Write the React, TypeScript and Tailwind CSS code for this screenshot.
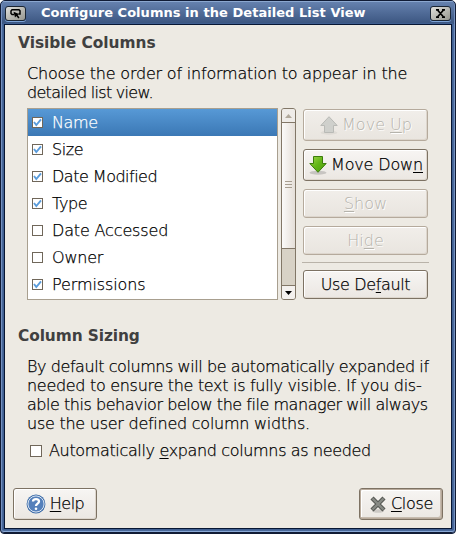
import React from "react";

const body = "font-['DejaVu_Sans',sans-serif] font-extralight text-black";
const stroke = "[-webkit-text-stroke:0.25px_currentColor]";

type ButtonProps = { className?: string; disabled?: boolean; focused?: boolean; children: React.ReactNode };

function Button({ className = "", disabled = false, focused = false, children }: ButtonProps) {
  const tone = disabled
    ? "border-[#b5aa9c] text-[#b5b3ac] [text-shadow:1px_1px_0_white] bg-linear-to-b from-[#f1eeea] to-[#e9e5df]"
    : `border-[#7d7263] text-black bg-linear-to-b from-[#f7f5f3] to-[#ebe7e2] ${stroke}`;
  const inset = focused
    ? "shadow-[inset_0_0_0_1px_#b8aa9b,inset_-2px_-2px_0_#c6bbae,inset_2px_2px_0_#fff]"
    : "shadow-[inset_1px_1px_0_#fff,inset_-1px_-1px_0_#ddd6cd]";
  return (
    <button
      disabled={disabled}
      className={`flex shrink-0 items-center justify-center whitespace-nowrap rounded-[3px] border text-[16px] leading-[19px] ${inset} ${tone} ${className}`}
    >
      {children}
    </button>
  );
}

function U({ children }: { children: string }) {
  return <span className="underline decoration-1 underline-offset-2">{children}</span>;
}

function Check({ checked }: { checked: boolean }) {
  return (
    <span className="flex h-[11px] w-[11px] shrink-0 border border-[#70675a] bg-white">
      {checked && (
        <svg width="9" height="9" viewBox="0 0 9 9">
          <path d="M1 4 L3.3 7 L8 1.3" fill="none" stroke="#5a9cdb" strokeWidth="1.9" />
        </svg>
      )}
    </span>
  );
}

function Arrow({ up = false }: { up?: boolean }) {
  return (
    <svg width="20" height="20" viewBox="0 0 20 20" className="shrink-0">
      <defs>
        <linearGradient id="green" x1="0" y1="0" x2="1" y2="1">
          <stop offset="0" stopColor="#a0d84c" />
          <stop offset=".5" stopColor="#62b516" />
          <stop offset="1" stopColor="#4d9c0b" />
        </linearGradient>
      </defs>
      <ellipse cx="10" cy="17.7" rx="8.5" ry="2" fill="#000" opacity={up ? ".05" : ".16"} />
      <path
        d={up ? "M10 1.7 L18.2 10.5 H14.5 V17.5 H5.5 V10.5 H1.8 Z" : "M5.5 1.5 H14.5 V8.5 H18.2 L10 17.3 L1.8 8.5 H5.5 Z"}
        fill={up ? "#cfd0cc" : "url(#green)"}
        stroke={up ? "#b9bab6" : "#3c7c0c"}
      />
    </svg>
  );
}

function TitleButton({ children }: { children: React.ReactNode }) {
  return (
    <span className="flex h-[15px] w-[21px] items-center justify-center rounded-[3px] border border-[#1b2533] bg-linear-to-br from-[#e0e0dc] to-[#96968f] shadow-[0_1px_0_#7da4d8]">
      {children}
    </span>
  );
}

const columns: [string, boolean, string][] = [
  ["Name", true, "tracking-[-0.4px]"],
  ["Size", true, "tracking-[-0.4px]"],
  ["Date Modified", true, "tracking-[-0.5px]"],
  ["Type", true, "tracking-[-0.4px]"],
  ["Date Accessed", false, "tracking-[-0.15px]"],
  ["Owner", false, "tracking-[-0.2px]"],
  ["Permissions", true, "tracking-[-0.1px]"],
];

export default function App() {
  return (
    <div className={`flex h-[534px] w-[456px] flex-col overflow-hidden rounded-t-[5px] rounded-b-[4px] border border-[#101b35] bg-[#49699b] shadow-[inset_1px_0_0_#7591c0,inset_-1px_0_0_#7591c0,inset_0_-1px_0_#101b35,inset_0_-2px_0_#8aa9d6] ${body}`}>
      <header className="mx-px flex h-[23px] shrink-0 items-center border-t border-[#8ba7cf] bg-linear-to-b from-[#6581ae] to-[#3b5580] px-[3px]">
        <TitleButton>
          <svg width="13" height="11" viewBox="0 0 13 11">
            <path d="M5 6.5 H3 L2 5.5 V3 L3 1.8 H10 L11 2.8 V6 H9.5" fill="none" stroke="#000" strokeWidth="1.5" />
            <path d="M4.5 3.8 L10 6 L8.6 7 L10.5 9.6 L9.3 10.6 L7.4 8 L6 9.5 Z" />
          </svg>
        </TitleButton>
        <h1 className="flex-1 whitespace-nowrap pl-[15px] text-[13px] font-bold leading-4 tracking-[0.04px] text-white">
          Configure Columns in the Detailed List View
        </h1>
        <TitleButton>
          <svg width="11" height="9" viewBox="0 0 11 9">
            <path d="M1 .8 H4 M7 .8 H10 M1 8.2 H4 M7 8.2 H10 M2.5 1 L8.5 8 M8.5 1 L2.5 8" stroke="#000" strokeWidth="1.7" />
          </svg>
        </TitleButton>
      </header>
      <main className="mx-[3px] mb-[4px] flex min-h-0 flex-1 flex-col border border-[#071633] bg-[#edeae3] shadow-[0_0_0_1px_#405f91]">
        <h2 className="mt-[8px] ml-[13px] text-[15.4px] font-bold leading-[20px] text-[#404040]">Visible Columns</h2>
        <p className={`mt-[11px] ml-[22px] whitespace-nowrap text-[16px] leading-[19px] ${stroke}`}>
          <span className="block tracking-[-0.2px]">Choose the order of information to appear in the</span>
          <span className="block tracking-[-0.7px]">detailed list view.</span>
        </p>
        <section className="mt-[6px] ml-[22px] flex h-[192px] shrink-0">
          <ul className="w-[251px] border border-[#a89f8f] bg-white">
            {columns.map(([name, on, tracking], i) => (
              <li
                key={name}
                className={`flex h-[27px] items-center gap-[9px] pl-[4px] text-[16px] ${
                  i === 0 ? "bg-linear-to-b from-[#5799d6] to-[#3b78b5] text-white" : ""
                }`}
              >
                <Check checked={on} />
                <span className={`leading-[19px] ${stroke} ${tracking}`}>{name}</span>
              </li>
            ))}
          </ul>
          <div className="ml-[3px] flex w-[15px] flex-col rounded-[3px] border border-[#827767] bg-[#d8d2c6]">
            <span className="flex h-[13px] items-center justify-center rounded-t-[2px] bg-[#efece8]">
              <svg width="7" height="4"><path d="M0 4 L3.5 0 L7 4Z" fill="#b1a99b" /></svg>
            </span>
            <span className="flex h-[127px] flex-col items-center justify-center gap-[2px] border-y border-[#827767] bg-linear-to-r from-[#fbfaf9] to-[#e5dfd8] pb-[3px]">
              <i className="h-px w-[7px] bg-[#a79e90]" />
              <i className="h-px w-[7px] bg-[#a79e90]" />
              <i className="h-px w-[7px] bg-[#a79e90]" />
            </span>
            <span className="mt-auto flex h-[14px] items-center justify-center rounded-b-[2px] border-t border-[#827767] bg-[#f4f1ee]">
              <svg width="7" height="4"><path d="M0 0 H7 L3.5 4Z" /></svg>
            </span>
          </div>
          <div className="ml-[6px] flex w-[127px] flex-col items-center pt-px">
            <Button disabled className="h-[32px] w-[125px] gap-[3px]"><Arrow up /><span className="pb-[2px]">Move <U>U</U>p</span></Button>
            <Button className="mt-2 h-[32px] w-[125px] gap-[3px]"><Arrow /><span className="pb-[2px] tracking-[-0.15px]">Move Dow<U>n</U></span></Button>
            <Button disabled className="mt-2 h-[29px] w-[125px]"><span><U>S</U>how</span></Button>
            <Button disabled className="mt-2 h-[29px] w-[125px]"><span>Hi<U>d</U>e</span></Button>
            <hr className="mt-[7px] w-full border-[#b9b3a9]" />
            <Button className="mt-[7px] h-[29px] w-[125px]"><span className="tracking-[-0.35px]">Use De<U>f</U>ault</span></Button>
          </div>
        </section>
        <h2 className="mt-[26px] ml-[13px] text-[15.4px] font-bold leading-[20px] tracking-[-0.1px] text-[#404040]">Column Sizing</h2>
        <p className={`mt-[11px] ml-[22px] whitespace-nowrap text-[16px] leading-[19px] ${stroke}`}>
          <span className="block tracking-[-0.43px]">By default columns will be automatically expanded if</span>
          <span className="block tracking-[-0.3px]">needed to ensure the text is fully visible. If you dis-</span>
          <span className="block tracking-[-0.46px]">able this behavior below the file manager will always</span>
          <span className="block tracking-[-0.25px]">use the user defined column widths.</span>
        </p>
        <label className={`mt-[8px] ml-[25px] flex items-center gap-[7px] whitespace-nowrap text-[16px] leading-[19px] ${stroke}`}>
          <span className="h-[12px] w-[12px] border border-[#70675a] bg-white" />
          <span className="tracking-[-0.35px]">Automatically <U>e</U>xpand columns as needed</span>
        </label>
        <footer className="mt-auto mb-[8px] flex justify-between pr-[8px] pl-[8px]">
          <Button className="h-[32px] w-[84px] gap-[4px]">
            <svg width="20" height="20" viewBox="0 0 20 20">
              <circle cx="10" cy="10" r="9.4" fill="#3465a4" />
              <circle cx="10" cy="10" r="8.1" fill="#5580bb" stroke="#e4edf7" />
              <path d="M7 7.5 C7 4.2 13 4.2 13 7.5 C13 9.7 10 9.5 10 12" fill="none" stroke="white" strokeWidth="2.3" />
              <circle cx="10" cy="14.7" r="1.3" fill="white" />
            </svg>
            <span className="pb-[2px] tracking-[-0.5px]"><U>H</U>elp</span>
          </Button>
          <Button focused className="h-[32px] w-[84px] gap-[4px]">
            <svg width="18" height="18" viewBox="0 0 18 18">
              <ellipse cx="9" cy="16" rx="6" ry="1.7" fill="#000" opacity=".14" />
              <path d="M3 3 L15 15 M15 3 L3 15" stroke="#555753" strokeWidth="4.4" />
              <path d="M3.5 3.5 L14.5 14.5 M14.5 3.5 L3.5 14.5" stroke="#888a85" strokeWidth="2.4" />
            </svg>
            <span className="pb-[2px] tracking-[-0.3px]"><U>C</U>lose</span>
          </Button>
        </footer>
      </main>
    </div>
  );
}
